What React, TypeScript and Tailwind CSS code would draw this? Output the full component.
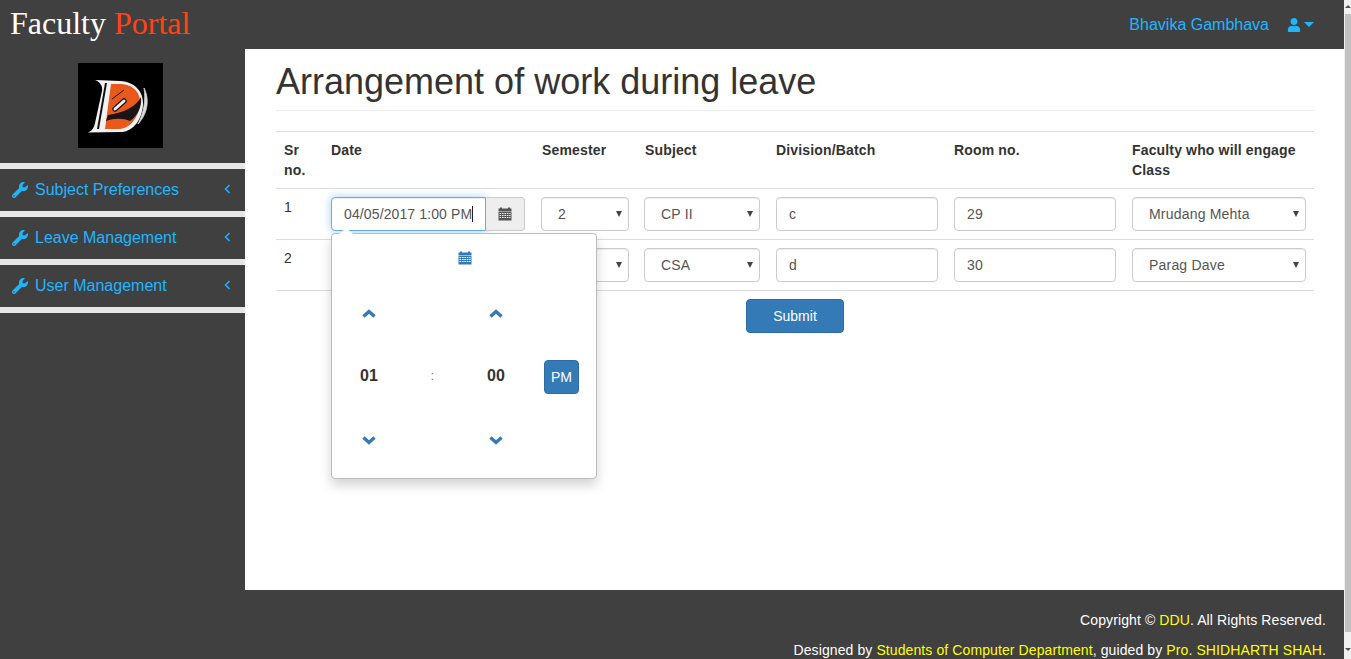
import { FaUser, FaWrench } from 'react-icons/fa';

const menuItems = ['Subject Preferences', 'Leave Management', 'User Management'];

const semesterOptions = ['2', '4', '6'];
const rows = [
  { sr: 1, semester: '2', subject: 'CP II', division: 'c', room: '29', faculty: 'Mrudang Mehta' },
  { sr: 2, semester: '4', subject: 'CSA', division: 'd', room: '30', faculty: 'Parag Dave' }
];

function CalendarIcon({ className }: { className: string }) {
  return (
    <svg viewBox="0 0 14 14" className={className} fill="currentColor">
      <path d="M2 0.5h2v1.5h-2zM10 0.5h2v1.5h-2z" />
      <path d="M0.5 1.5h13v3h-13z" />
      <path
        fillRule="evenodd"
        d="M0.5 5h13v8.5h-13zM1.5 6v1h1.6v-1zM4 6v1h1.6v-1zM6.4 6v1h1.6v-1zM8.8 6v1h1.6v-1zM11.2 6v1h1.4v-1zM1.5 8v1h1.6v-1zM4 8v1h1.6v-1zM6.4 8v1h1.6v-1zM8.8 8v1h1.6v-1zM11.2 8v1h1.4v-1zM1.5 10v1h1.6v-1zM4 10v1h1.6v-1zM6.4 10v1h1.6v-1zM8.8 10v1h1.6v-1zM11.2 10v1h1.4v-1z"
      />
    </svg>
  );
}

function Chevron({ down }: { down?: boolean }) {
  return (
    <svg viewBox="0 0 14 10" className="h-[10px] w-[14px] text-[#337ab7]" fill="none" stroke="currentColor" strokeWidth="3.4">
      <path d={down ? 'M1.5 2.5L7 7.5L12.5 2.5' : 'M1.5 7.5L7 2.5L12.5 7.5'} />
    </svg>
  );
}

function Logo() {
  return (
    <svg viewBox="0 0 85 85" className="h-[85px] w-[85px] bg-black">
      <path d="M17 17L42 18C58 19 66 30 65 42C64 56 56 68 44 69L10 69.5C14 68 16 65 17 60L24 28C25 23 22 19 17 17Z" fill="#f2f2f2" />
      <path d="M27 20L29 20L21 66L19 66Z" fill="#111" />
      <path d="M33 21L44 21C56 22 63 30 62 42C60 55 52 65 42 66L27 66Z" fill="#e9591c" />
      <path d="M30 52C45 50 58 44 63 34C64 44 60 52 52 58C45 55 36 55 28 58Z" fill="#1a1416" />
      <path d="M34 36L46 27" stroke="#1a1416" strokeWidth="1" />
      <path d="M37 46L46 38" stroke="#1a1416" strokeWidth="5.5" strokeLinecap="round" />
      <path d="M37 46L46 38" stroke="#f6f0ec" strokeWidth="3" strokeLinecap="round" />
      <path d="M66 25C71 35 71 49 60 61C66 49 68 37 66 25Z" fill="#dcdcdc" stroke="#dcdcdc" strokeWidth="0.8" />
    </svg>
  );
}

const fieldClass =
  'h-[34px] w-full rounded border border-[#ccc] bg-white px-3 text-[14px] tracking-[0.1px] text-[#555] shadow-[inset_0_1px_1px_rgba(0,0,0,0.075)] outline-none';

function SelectField({ value, options }: { value: string; options: string[] }) {
  return (
    <div className="relative">
      <select
        defaultValue={value}
        className="h-[34px] w-full appearance-none rounded border border-[#ccc] bg-white pl-[16px] pr-6 text-[14px] tracking-[0.2px] text-[#555] shadow-[inset_0_1px_1px_rgba(0,0,0,0.075)] outline-none"
      >
        {options.map((option) => (
          <option key={option}>{option}</option>
        ))}
      </select>
      <span className="pointer-events-none absolute right-[7px] top-[14px] size-0 border-x-[3px] border-t-[6px] border-x-transparent border-t-[#444]" />
    </div>
  );
}

function TimePicker() {
  return (
    <div className="absolute left-0 top-[36px] z-10 h-[246px] w-[266px] rounded border border-[#bbb] bg-white shadow-[0_6px_12px_rgba(0,0,0,0.175)]">
      <div className="absolute -top-[6px] left-[7px] size-0 border-x-[7px] border-b-[6px] border-x-transparent border-b-white" />
      <div className="flex h-[47px] items-center justify-center pl-[1px]">
        <CalendarIcon className="size-[14px] text-[#337ab7]" />
      </div>
      <div className="grid grid-cols-[54px_73px_54px_1fr] grid-rows-[66px_58px_70px] items-center justify-items-center pl-[10px] text-[#333]">
        <Chevron />
        <span />
        <Chevron />
        <span />
        <span className="text-[16px] font-bold">01</span>
        <span className="text-[12px] text-[#8a6d3b]">:</span>
        <span className="text-[16px] font-bold">00</span>
        <button className="mr-[17px] mt-[2px] h-[34px] w-[35px] justify-self-end rounded border border-[#2e6da4] bg-[#337ab7] text-[14px] text-white">
          PM
        </button>
        <Chevron down />
        <span />
        <Chevron down />
        <span />
      </div>
    </div>
  );
}

export default function App() {
  return (
    <div className="flex h-[659px] w-[1351px] overflow-hidden bg-[#404040] font-['Liberation_Sans',Arial,sans-serif] text-[14px] text-[#333]">
      <div className="flex w-[1344px] flex-col">
        <header className="flex h-[49px] shrink-0 items-center justify-between pl-[10px] pr-[30px]">
          <div className="pb-[3px] font-['Liberation_Serif',serif] text-[32px] leading-none text-white">
            Faculty <span className="text-[#ff4413]">Portal</span>
          </div>
          <div className="flex items-center text-[16px] text-[#1eb6ff]">
            <span>Bhavika Gambhava</span>
            <FaUser className="ml-[18px] size-[14px]" />
            <span className="ml-[3px] size-0 border-x-[5px] border-t-[5px] border-x-transparent border-t-[#1eb6ff]" />
          </div>
        </header>

        <div className="flex h-[541px] shrink-0">
          <aside className="w-[245px] shrink-0">
            <div className="flex h-[114px] items-start justify-center pr-[4px] pt-[14px]">
              <Logo />
            </div>
            <nav className="border-t-[6px] border-[#e6e6e6]">
              {menuItems.map((item) => (
                <div key={item} className="flex h-[48px] items-center border-b-[6px] border-[#e6e6e6] pl-[12px] pr-[14px] text-[16px] text-[#1eb6ff]">
                  <FaWrench className="size-[16px]" />
                  <span className="ml-[7px]">{item}</span>
                  <svg viewBox="0 0 7 10" className="ml-auto mb-[3px] h-[10px] w-[7px]" fill="none" stroke="currentColor" strokeWidth="1.5">
                    <path d="M5.5 1L1.5 5L5.5 9" />
                  </svg>
                </div>
              ))}
            </nav>
          </aside>

          <main className="flex-1 bg-white pl-[31px] pr-[30px]">
            <div className="mt-[13px] border-b border-[#eee] pb-[8px]">
              <h1 className="text-[36px] leading-[40px] text-[#333]">Arrangement of work during leave</h1>
            </div>

            <table className="mt-[20px] w-full table-fixed border-t border-[#ddd]">
              <colgroup>
                <col className="w-[47px]" />
                <col className="w-[210px]" />
                <col className="w-[104px]" />
                <col className="w-[131px]" />
                <col className="w-[178px]" />
                <col className="w-[178px]" />
                <col className="w-[190px]" />
              </colgroup>
              <thead>
                <tr className="border-b border-[#ddd] text-left align-top font-bold leading-[20px] tracking-[0.15px]">
                  <th className="h-[57px] px-2 pt-2">Sr no.</th>
                  <th className="px-2 pt-2">Date</th>
                  <th className="pl-[9px] pr-2 pt-2">Semester</th>
                  <th className="px-2 pt-2">Subject</th>
                  <th className="px-2 pt-2">Division/Batch</th>
                  <th className="px-2 pt-2">Room no.</th>
                  <th className="px-2 pt-2">Faculty who will engage Class</th>
                </tr>
              </thead>
              <tbody>
                {rows.map((row) => (
                  <tr key={row.sr} className="border-b border-[#ddd] align-top">
                    <td className="h-[50px] px-2 pt-2 leading-[20px]">{row.sr}</td>
                    <td className="px-2 pt-2">
                      {row.sr === 1 ? (
                        <div className="relative flex">
                          <div className="flex h-[34px] w-[155px] items-center whitespace-nowrap rounded-l border border-[#66afe9] bg-white pl-3 tracking-[0.12px] text-[#555] shadow-[inset_0_1px_1px_rgba(0,0,0,0.075),0_0_8px_rgba(102,175,233,0.6)]">
                            04/05/2017 1:00 PM
                            <span className="h-[16px] w-px bg-[#222]" />
                          </div>
                          <div className="flex h-[34px] w-[39px] items-center justify-center rounded-r border border-l-0 border-[#ccc] bg-[#eee] text-[#555]">
                            <CalendarIcon className="size-[14px]" />
                          </div>
                          <TimePicker />
                        </div>
                      ) : (
                        <div className="h-[34px] rounded-l border border-[#ccc] bg-white" />
                      )}
                    </td>
                    <td className="py-2 pl-[8px] pr-[8px]">
                      <SelectField value={row.semester} options={semesterOptions} />
                    </td>
                    <td className="py-2 pl-[7px] pr-[8px]">
                      <SelectField value={row.subject} options={['CP II', 'CSA']} />
                    </td>
                    <td className="px-2 py-2">
                      <input readOnly value={row.division} className={fieldClass} />
                    </td>
                    <td className="px-2 py-2">
                      <input readOnly value={row.room} className={fieldClass} />
                    </td>
                    <td className="px-2 py-2">
                      <SelectField value={row.faculty} options={['Mrudang Mehta', 'Parag Dave']} />
                    </td>
                  </tr>
                ))}
              </tbody>
            </table>

            <div className="mt-[8px] flex justify-center">
              <button className="h-[34px] w-[98px] rounded border border-[#2e6da4] bg-[#337ab7] text-white">Submit</button>
            </div>
          </main>
        </div>

        <footer className="flex flex-col items-end pt-[20px] pr-[18px] leading-[20px] tracking-[0.1px] text-white">
          <p>
            Copyright © <span className="text-[#ffff00]">DDU</span>. All Rights Reserved.
          </p>
          <p className="mt-[10px]">
            Designed by <span className="text-[#ffff00]">Students of Computer Department</span>, guided by{' '}
            <span className="text-[#ffff00]">Pro. SHIDHARTH SHAH</span>.
          </p>
        </footer>
      </div>

      <div className="flex w-[7px] flex-col items-center bg-[#f1f1f1]">
        <span className="mt-[5px] size-0 border-x-[3px] border-b-[3px] border-x-transparent border-b-[#505050]" />
        <div className="ml-auto mt-[6px] h-[618px] w-[6px] bg-[#c1c1c1]" />
        <span className="mt-[16px] size-0 border-x-[3px] border-t-[3px] border-x-transparent border-t-[#505050]" />
      </div>
    </div>
  );
}
